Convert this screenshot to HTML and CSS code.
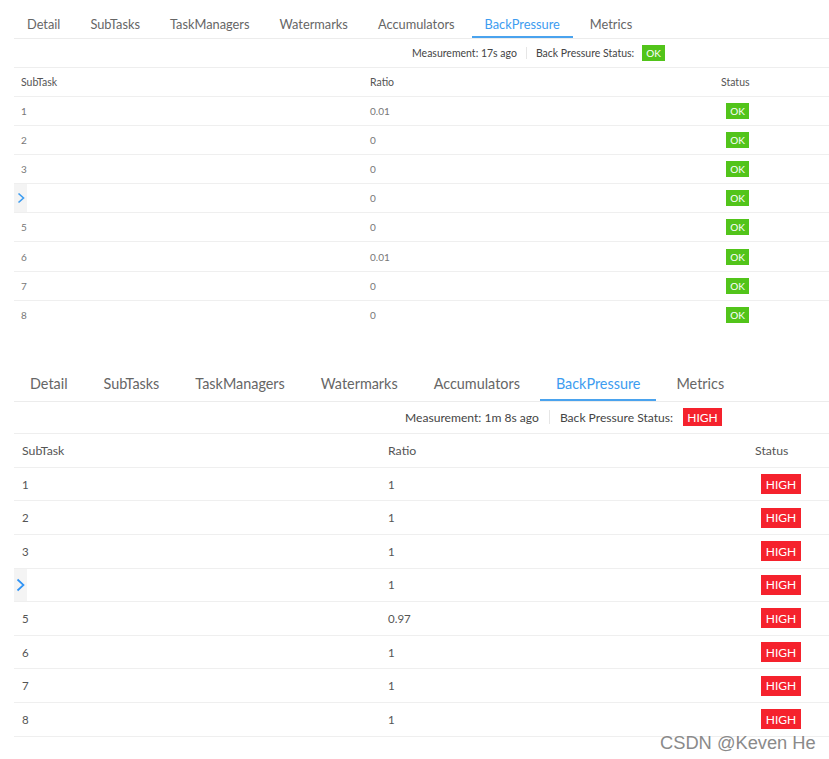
FILE: index.html
```html
<!DOCTYPE html>
<html>
<head>
<meta charset="utf-8">
<link rel="stylesheet" href="styles.css">
</head>
<body>
<div class="page">
  <section class="panel panel-a">
    <nav class="tabs">
      <div class="tab">Detail</div>
      <div class="tab">SubTasks</div>
      <div class="tab">TaskManagers</div>
      <div class="tab">Watermarks</div>
      <div class="tab">Accumulators</div>
      <div class="tab active">BackPressure</div>
      <div class="tab">Metrics</div>
    </nav>
    <div class="status-bar">
      <span>Measurement: 17s ago</span>
      <span class="sep"></span>
      <span>Back Pressure Status:</span>
      <span class="badge ok">OK</span>
    </div>
    <div class="table">
      <div class="row head"><div>SubTask</div><div>Ratio</div><div>Status</div></div>
      <div class="row"><div>1</div><div>0.01</div><div><span class="badge ok">OK</span></div></div>
      <div class="row"><div>2</div><div>0</div><div><span class="badge ok">OK</span></div></div>
      <div class="row"><div>3</div><div>0</div><div><span class="badge ok">OK</span></div></div>
      <div class="row"><div><span class="handle"><svg viewBox="0 0 8 12" width="8" height="12"><path d="M1.5 1.5 L6.5 6 L1.5 10.5" fill="none" stroke="#3d9cf0" stroke-width="1.6"/></svg></span></div><div>0</div><div><span class="badge ok">OK</span></div></div>
      <div class="row"><div>5</div><div>0</div><div><span class="badge ok">OK</span></div></div>
      <div class="row"><div>6</div><div>0.01</div><div><span class="badge ok">OK</span></div></div>
      <div class="row"><div>7</div><div>0</div><div><span class="badge ok">OK</span></div></div>
      <div class="row last"><div>8</div><div>0</div><div><span class="badge ok">OK</span></div></div>
    </div>
  </section>

  <section class="panel panel-b">
    <nav class="tabs">
      <div class="tab">Detail</div>
      <div class="tab">SubTasks</div>
      <div class="tab">TaskManagers</div>
      <div class="tab">Watermarks</div>
      <div class="tab">Accumulators</div>
      <div class="tab active">BackPressure</div>
      <div class="tab">Metrics</div>
    </nav>
    <div class="status-bar">
      <span>Measurement: 1m 8s ago</span>
      <span class="sep"></span>
      <span>Back Pressure Status:</span>
      <span class="badge high">HIGH</span>
    </div>
    <div class="table">
      <div class="row head"><div>SubTask</div><div>Ratio</div><div>Status</div></div>
      <div class="row"><div>1</div><div>1</div><div><span class="badge high">HIGH</span></div></div>
      <div class="row"><div>2</div><div>1</div><div><span class="badge high">HIGH</span></div></div>
      <div class="row"><div>3</div><div>1</div><div><span class="badge high">HIGH</span></div></div>
      <div class="row"><div><span class="handle"><svg viewBox="0 0 9 14" width="9" height="14"><path d="M1.5 1.5 L7.5 7 L1.5 12.5" fill="none" stroke="#2f93f5" stroke-width="1.7"/></svg></span></div><div>1</div><div><span class="badge high">HIGH</span></div></div>
      <div class="row"><div>5</div><div>0.97</div><div><span class="badge high">HIGH</span></div></div>
      <div class="row"><div>6</div><div>1</div><div><span class="badge high">HIGH</span></div></div>
      <div class="row"><div>7</div><div>1</div><div><span class="badge high">HIGH</span></div></div>
      <div class="row"><div>8</div><div>1</div><div><span class="badge high">HIGH</span></div></div>
    </div>
  </section>
  <div class="watermark">CSDN @Keven He</div>
</div>
</body>
</html>
```

FILE: styles.css
```css
html, body {
  margin: 0;
  padding: 0;
  background: #ffffff;
}
body {
  font-family: Lato, "Open Sans", sans-serif;
  width: 829px;
  height: 759px;
  overflow: hidden;
}
.page {
  position: relative;
  width: 829px;
  height: 759px;
  padding-top: 10px;
  box-sizing: border-box;
}
.panel {
  margin-left: 14px;
  width: 815px;
  display: flex;
  flex-direction: column;
}
.tabs {
  display: flex;
  border-bottom: 1px solid #ececec;
}
.tab {
  color: #666;
  box-sizing: border-box;
  border-bottom: 2px solid transparent;
  white-space: nowrap;
}
.tab.active {
  color: #3d9cf0;
  border-bottom-color: #4aa3ee;
}
.status-bar {
  display: flex;
  align-items: center;
  border-bottom: 1px solid #eeeeee;
  color: #444;
  white-space: nowrap;
}
.sep {
  width: 1px;
  background: #e6e6e6;
}
.badge {
  display: inline-flex;
  align-items: center;
  justify-content: center;
  color: #fff;
  box-sizing: border-box;
}
.badge.ok {
  background: #52c41a;
}
.badge.high {
  background: #f5222d;
}
.row {
  display: grid;
  align-items: center;
  border-bottom: 1px solid #efefef;
  position: relative;
  box-sizing: border-box;
}
.row.last {
  border-bottom-color: transparent;
}
.row.head {
  color: #555;
}
.handle {
  position: absolute;
  left: 0;
  top: 0;
  bottom: 0;
  width: 13px;
  background: #f4f4f4;
  display: flex;
  align-items: center;
  justify-content: center;
}

/* panel A (smaller) */
.panel-a .tabs {
  height: 29px;
  box-sizing: border-box;
  gap: 4px;
}
.panel-a .tab {
  font-size: 12.8px;
  padding: 1px 13px 0;
  line-height: 26px;
  height: 28px;
}
.panel-a .status-bar {
  height: 29px;
  box-sizing: border-box;
  padding-left: 398px;
  font-size: 10.5px;
  gap: 9px;
}
.panel-a .sep {
  height: 12px;
}
.panel-a .status-bar .badge {
  width: 23px;
  height: 16px;
  font-size: 10px;
  margin-left: -1px;
}
.panel-a .row {
  grid-template-columns: 349px 351px 1fr;
  padding-left: 7px;
  height: 29.1px;
  font-size: 10px;
  color: #777;
}
.panel-a .row.head {
  height: 29px;
  font-size: 10.5px;
  color: #555;
}
.panel-a .row .badge {
  width: 23px;
  height: 16px;
  font-size: 10px;
  margin-left: 5px;
}

/* panel B (larger) */
.panel-b {
  margin-top: 39px;
}
.panel-b .tabs {
  height: 33px;
  box-sizing: border-box;
  gap: 4px;
}
.panel-b .tab {
  font-size: 14.4px;
  padding: 0 16px;
  line-height: 30px;
  height: 32px;
}
.panel-b .status-bar {
  height: 32px;
  box-sizing: border-box;
  padding-left: 391px;
  font-size: 12.1px;
  gap: 10px;
}
.panel-b .sep {
  height: 14px;
}
.panel-b .status-bar .badge {
  width: 39px;
  height: 18px;
  font-size: 12px;
  margin-left: 0;
}
.panel-b .row {
  grid-template-columns: 366px 367px 1fr;
  padding-left: 8px;
  height: 33.6px;
  font-size: 11.5px;
  color: #555;
}
.panel-b .row.head {
  height: 34px;
  font-size: 12.3px;
}
.panel-b .row .badge {
  width: 40px;
  height: 20px;
  font-size: 12px;
  margin-left: 6px;
}
.watermark {
  position: absolute;
  left: 660px;
  top: 732px;
  font-family: "Liberation Sans", Arial, sans-serif;
  font-size: 18.3px;
  color: #8a8a8a;
  text-shadow: 0 0 2px #fff;
  white-space: nowrap;
}
```
